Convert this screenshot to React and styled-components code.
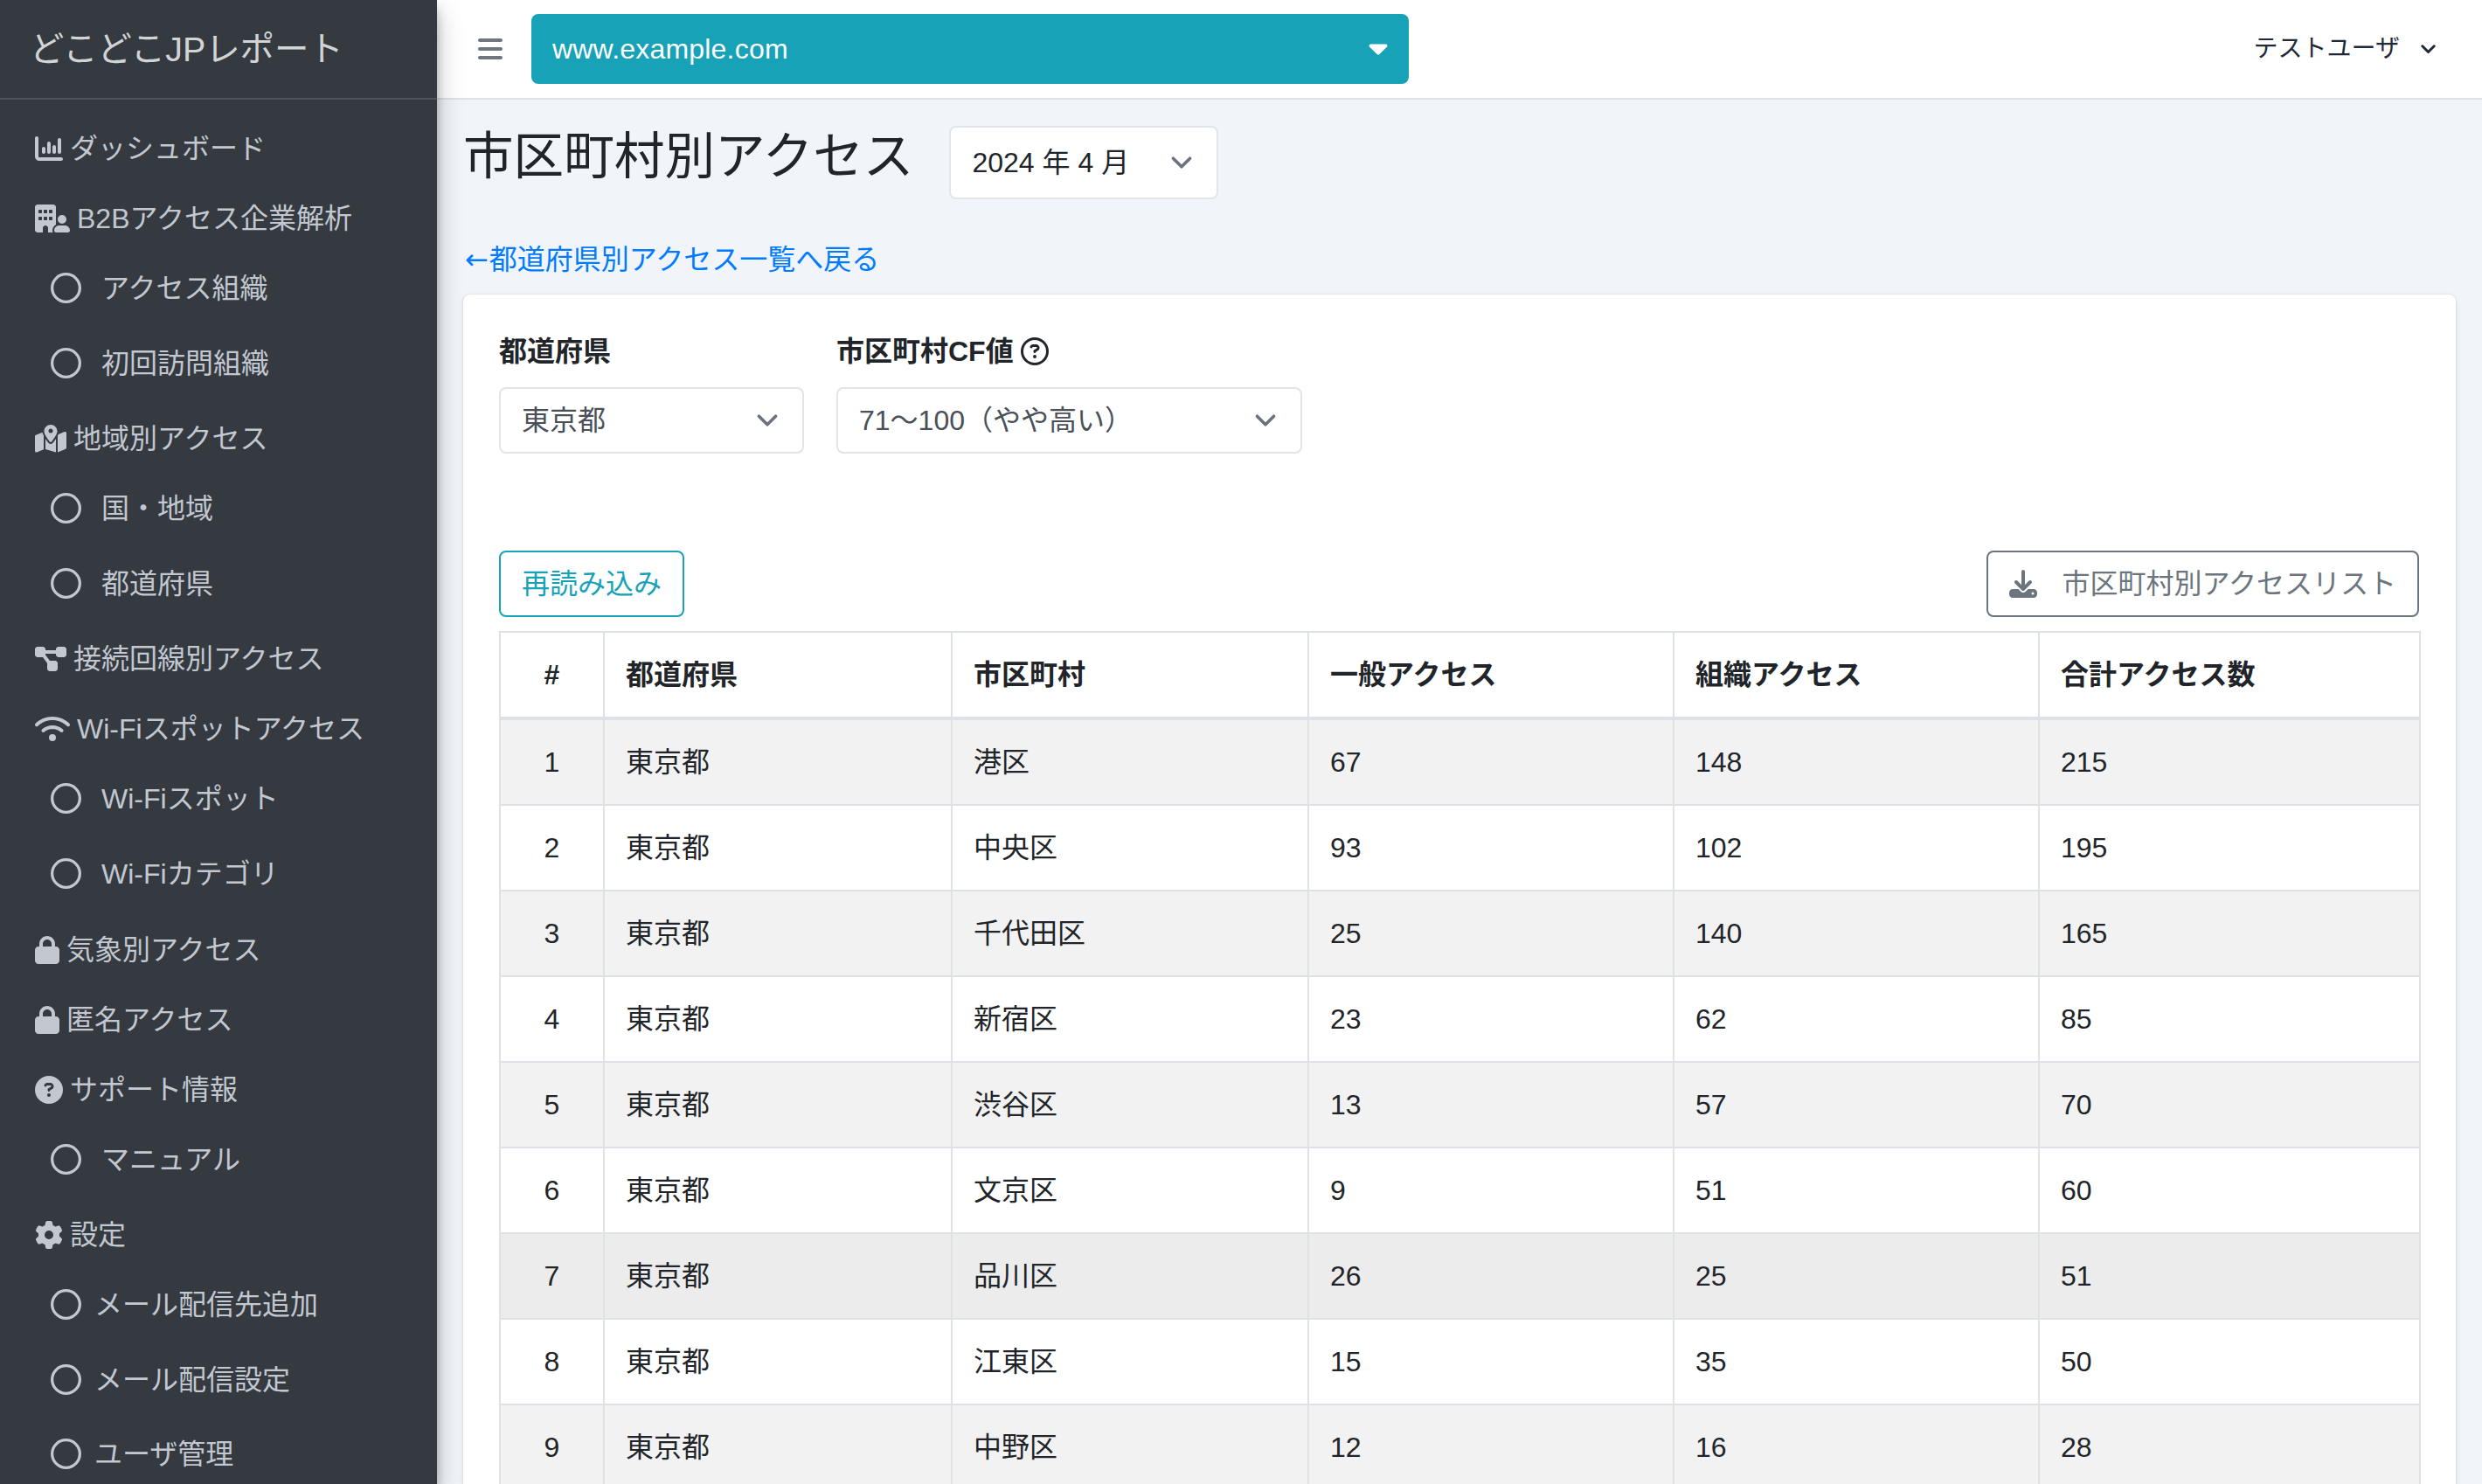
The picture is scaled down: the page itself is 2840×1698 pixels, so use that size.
import React from "react";
import styled, { createGlobalStyle } from "styled-components";
import {
  FaChartColumn,
  FaBuildingUser,
  FaMapLocationDot,
  FaDiagramProject,
  FaWifi,
  FaLock,
  FaCircleQuestion,
  FaGear,
  FaRegCircle,
  FaBars,
  FaDownload,
  FaRegCircleQuestion,
} from "react-icons/fa6";

const GlobalStyle = createGlobalStyle`
  html, body {
    margin: 0;
    height: 100%;
    overflow: hidden;
  }
  body {
    font-family: "Liberation Sans", "Noto Sans CJK JP", sans-serif;
    font-size: 32px;
    line-height: 48px;
    color: #212529;
    background: #f1f5f9;
  }
  * {
    box-sizing: border-box;
  }
`;

const Shell = styled.div`
  display: flex;
  height: 100vh;
  overflow: hidden;
`;

const Sidebar = styled.aside`
  flex: 0 0 500px;
  background: #343a40;
  color: #c2c7d0;
  position: relative;
  z-index: 2;
  box-shadow: 0 14px 28px rgba(0, 0, 0, 0.25), 0 10px 10px rgba(0, 0, 0, 0.22);
`;

const Brand = styled.div`
  height: 114px;
  padding: 32px 0 0 34px;
  font-size: 39.4px;
  line-height: 48px;
  color: rgba(255, 255, 255, 0.8);
  border-bottom: 2px solid #4b545c;
`;

const Nav = styled.nav`
  padding-top: 16px;
`;

const TopItem = styled.div`
  display: flex;
  align-items: center;
  gap: 8px;
  height: 80px;
  padding: 0 0 0 40px;
  svg {
    flex: none;
    height: 32px;
    width: ${(props) => props.$iconWidth}px;
    fill: #c2c7d0;
  }
`;

const SubGroup = styled.div`
  padding-bottom: 1px;
`;

const SubItem = styled.div`
  display: flex;
  align-items: flex-start;
  gap: ${(props) => props.$gap || 23}px;
  height: 85.6px;
  padding: 16px 0 0 58px;
  svg {
    height: 35px;
    width: 35px;
    margin-top: 6px;
    fill: #c2c7d0;
  }
`;

const Column = styled.div`
  flex: 1;
  min-width: 0;
  display: flex;
  flex-direction: column;
`;

const Navbar = styled.header`
  flex: none;
  display: flex;
  align-items: center;
  height: 114px;
  padding: 0 53px 0 45px;
  background: #fff;
  border-bottom: 2px solid #dee2e6;
`;

const MenuButton = styled.div`
  display: flex;
  margin-right: 31px;
  color: #6f767d;
  font-size: 32px;
`;

const SiteSelect = styled.div`
  display: flex;
  align-items: center;
  justify-content: space-between;
  width: 1004px;
  height: 80px;
  padding: 0 24px;
  border-radius: 8px;
  background: #17a2b8;
  color: #fff;
  letter-spacing: 0.2px;
`;

const UserMenu = styled.div`
  display: flex;
  align-items: center;
  gap: 24px;
  margin-left: auto;
  font-size: 28px;
  color: #1f2937;
`;

const Content = styled.main`
  flex: none;
  padding: 30px 30px 0;
`;

const TitleRow = styled.div`
  display: flex;
  align-items: flex-start;
  gap: 41px;
`;

const Title = styled.h1`
  margin: 0;
  font-size: 57.6px;
  line-height: 70px;
  font-weight: 400;
`;

const BackLink = styled.a`
  display: block;
  margin: 45px 0 16px;
  color: #007bff;
  text-decoration: none;
`;

const Arrow = styled.span`
  font-family: "DejaVu Sans", sans-serif;
  margin: 0 1px 0 2px;
`;

const Card = styled.section`
  background: #fff;
  border-radius: 8px;
  padding: 41px 42px 40px 41px;
  box-shadow: 0 0 2px rgba(0, 0, 0, 0.125), 0 2px 6px rgba(0, 0, 0, 0.1);
`;

const Filters = styled.div`
  display: flex;
  gap: 37px;
  height: 252px;
`;

const Label = styled.div`
  display: flex;
  align-items: center;
  gap: 8px;
  margin-bottom: 17px;
  font-weight: 700;
  svg {
    font-size: 32px;
    color: #212529;
  }
`;

const SelectBox = styled.div`
  display: flex;
  align-items: center;
  justify-content: space-between;
  width: ${(props) => props.$width}px;
  height: ${(props) => props.$height || 76}px;
  padding: 0 16px 0 ${(props) => props.$pad || 24}px;
  background: #fff;
  border: 2px solid #e1e4e8;
  border-radius: 8px;
  color: ${(props) => props.$color || "#495057"};
`;

const Actions = styled.div`
  display: flex;
  justify-content: space-between;
  margin-bottom: 16px;
`;

const OutlineButton = styled.button`
  display: flex;
  align-items: center;
  gap: ${(props) => props.$gap || 0}px;
  height: 76px;
  padding: 0 24px;
  background: #fff;
  border: 2px solid ${(props) => props.$color};
  border-radius: 8px;
  color: ${(props) => props.$color};
  font: inherit;
  svg {
    font-size: 32px;
  }
`;

const Table = styled.table`
  width: 100%;
  border-collapse: collapse;
  table-layout: fixed;
`;

const Th = styled.th`
  padding: 24px;
  border: 2px solid #dee2e6;
  border-bottom-width: 4px;
  text-align: ${(props) => (props.$center ? "center" : "left")};
  font-weight: 700;
`;

const Td = styled.td`
  padding: 24px;
  border: 2px solid #dee2e6;
  text-align: ${(props) => (props.$center ? "center" : "left")};
  background: ${(props) => props.$bg};
`;

const Chevron = ({ size = 48 }) => (
  <svg width={size} height={size} viewBox="0 0 20 20" fill="none">
    <path d="M6 8l4 4 4-4" stroke="#6b7280" strokeWidth="1.5" strokeLinecap="round" strokeLinejoin="round" />
  </svg>
);

const Caret = () => (
  <svg width="22" height="13" viewBox="0 0 22 13">
    <path d="M2.5 0.5h17c1.7 0 2.6 2 1.4 3.3l-8.5 8.3c-.8.8-2 .8-2.8 0L1.1 3.8C-.1 2.5.8.5 2.5.5z" fill="#fff" />
  </svg>
);

const UserChevron = () => (
  <svg width="17" height="11" viewBox="0 0 17 11" fill="none">
    <path d="M1.8 1.8l6.7 6.7 6.7-6.7" stroke="#1f2937" strokeWidth="3" strokeLinecap="round" strokeLinejoin="round" />
  </svg>
);

const nav = [
  { icon: FaChartColumn, iconWidth: 32, label: "ダッシュボード" },
  { icon: FaBuildingUser, iconWidth: 40, label: "B2Bアクセス企業解析", subs: ["アクセス組織", "初回訪問組織"] },
  { icon: FaMapLocationDot, iconWidth: 36, label: "地域別アクセス", subs: ["国・地域", "都道府県"] },
  { icon: FaDiagramProject, iconWidth: 36, label: "接続回線別アクセス" },
  { icon: FaWifi, iconWidth: 40, label: "Wi-Fiスポットアクセス", subs: ["Wi-Fiスポット", "Wi-Fiカテゴリ"] },
  { icon: FaLock, iconWidth: 28, label: "気象別アクセス" },
  { icon: FaLock, iconWidth: 28, label: "匿名アクセス" },
  { icon: FaCircleQuestion, iconWidth: 32, label: "サポート情報", subs: ["マニュアル"] },
  { icon: FaGear, iconWidth: 32, label: "設定", subs: ["メール配信先追加", "メール配信設定", "ユーザ管理"], subGap: 15 },
];

const columns = [
  { width: 119, label: "#", center: true },
  { width: 398, label: "都道府県" },
  { width: 408, label: "市区町村" },
  { width: 418, label: "一般アクセス" },
  { width: 418, label: "組織アクセス" },
  { width: 436, label: "合計アクセス数" },
];

const rows = [
  ["港区", 67, 148, 215],
  ["中央区", 93, 102, 195],
  ["千代田区", 25, 140, 165],
  ["新宿区", 23, 62, 85],
  ["渋谷区", 13, 57, 70],
  ["文京区", 9, 51, 60],
  ["品川区", 26, 25, 51],
  ["江東区", 15, 35, 50],
  ["中野区", 12, 16, 28],
];

const rowBackground = (index) => {
  if (index === 6) return "#ececec";
  return index % 2 === 0 ? "#f2f2f2" : "#fff";
};

export default function App() {
  return (
    <>
      <GlobalStyle />
      <Shell>
        <Sidebar>
          <Brand>どこどこJPレポート</Brand>
          <Nav>
            {nav.map(({ icon: Icon, iconWidth, label, subs, subGap }) => (
              <div key={label}>
                <TopItem $iconWidth={iconWidth}>
                  <Icon />
                  <span>{label}</span>
                </TopItem>
                {subs && (
                  <SubGroup>
                    {subs.map((sub) => (
                      <SubItem key={sub} $gap={subGap}>
                        <FaRegCircle />
                        <span>{sub}</span>
                      </SubItem>
                    ))}
                  </SubGroup>
                )}
              </div>
            ))}
          </Nav>
        </Sidebar>
        <Column>
          <Navbar>
            <MenuButton>
              <FaBars />
            </MenuButton>
            <SiteSelect>
              <span>www.example.com</span>
              <Caret />
            </SiteSelect>
            <UserMenu>
              <span>テストユーザ</span>
              <UserChevron />
            </UserMenu>
          </Navbar>
          <Content>
            <TitleRow>
              <Title>市区町村別アクセス</Title>
              <SelectBox $width={308} $height={84} $color="#212529">
                <span>2024 年 4 月</span>
                <Chevron />
              </SelectBox>
            </TitleRow>
            <BackLink href="#">
              <Arrow>←</Arrow>都道府県別アクセス一覧へ戻る
            </BackLink>
            <Card>
              <Filters>
                <div>
                  <Label>都道府県</Label>
                  <SelectBox $width={349}>
                    <span>東京都</span>
                    <Chevron />
                  </SelectBox>
                </div>
                <div>
                  <Label>
                    市区町村CF値
                    <FaRegCircleQuestion />
                  </Label>
                  <SelectBox $width={533}>
                    <span>71〜100（やや高い）</span>
                    <Chevron />
                  </SelectBox>
                </div>
              </Filters>
              <Actions>
                <OutlineButton $color="#17a2b8">再読み込み</OutlineButton>
                <OutlineButton $color="#6c757d" $gap={29}>
                  <FaDownload />
                  市区町村別アクセスリスト
                </OutlineButton>
              </Actions>
              <Table>
                <colgroup>
                  {columns.map((col) => (
                    <col key={col.label} width={col.width} />
                  ))}
                </colgroup>
                <thead>
                  <tr>
                    {columns.map((col) => (
                      <Th key={col.label} $center={col.center}>
                        {col.label}
                      </Th>
                    ))}
                  </tr>
                </thead>
                <tbody>
                  {rows.map(([city, general, org, total], index) => (
                    <tr key={city}>
                      <Td $center $bg={rowBackground(index)}>{index + 1}</Td>
                      <Td $bg={rowBackground(index)}>東京都</Td>
                      <Td $bg={rowBackground(index)}>{city}</Td>
                      <Td $bg={rowBackground(index)}>{general}</Td>
                      <Td $bg={rowBackground(index)}>{org}</Td>
                      <Td $bg={rowBackground(index)}>{total}</Td>
                    </tr>
                  ))}
                </tbody>
              </Table>
            </Card>
          </Content>
        </Column>
      </Shell>
    </>
  );
}
